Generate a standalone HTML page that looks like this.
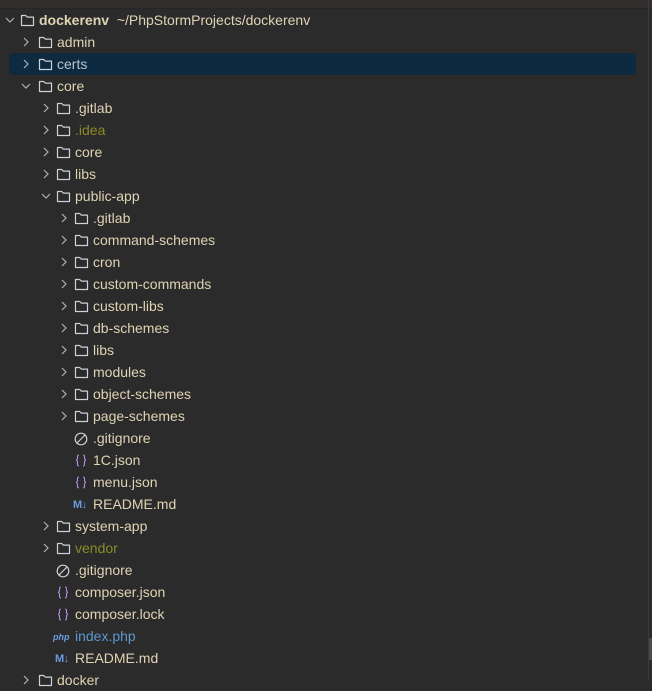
<!DOCTYPE html>
<html><head><meta charset="utf-8"><style>
html,body{margin:0;padding:0}
body{width:652px;height:681px;background:#2b2b2b;position:relative;overflow:hidden;font-family:"Liberation Sans","DejaVu Sans",sans-serif;font-size:14px;color:#ded3b3}
.top{position:absolute;left:0;top:0;width:652px;height:8px;background:#312e2d;border-bottom:1px solid #262626}
.sel{position:absolute;left:9px;top:53px;width:627px;height:22px;background:#0d2a40;border-radius:4px}
.r{position:absolute;height:22px;line-height:22px;white-space:nowrap}
.ch{position:absolute;top:0;width:12px;height:22px;line-height:0}
.ch svg,.ic svg{display:block}
.ic{position:absolute;top:5px;line-height:0;width:16px;height:14px}
.t{position:absolute;top:0}
.ol{color:#8a8c27}
.bl{color:#5c98cf}
.vbar{position:absolute;right:3px;top:0;width:1px;height:681px;background:#3a3a3a}
.thumb{position:absolute;right:0;top:638px;width:3px;height:22px;background:#4a4a4a}
</style></head><body>
<div class="top"></div>
<div class="sel"></div>
<div class="vbar"></div><div class="thumb"></div>
<div id="tree"></div>
<script>
var F='<svg width="15" height="13" viewBox="0 0 15 13"><path d="M1.5 1.5h4.2l1.6 1.6h6.2v8.4h-12z" fill="none" stroke="#ced0d6" stroke-width="1.2" stroke-linejoin="round"/></svg>';
var CR='<svg width="12" height="22" viewBox="0 0 12 22"><path d="M4 7l4 4-4 4" fill="none" stroke="#aeb1b7" stroke-width="1.2"/></svg>';
var CD='<svg width="12" height="22" viewBox="0 0 12 22"><path d="M2 9l4 4 4-4" fill="none" stroke="#aeb1b7" stroke-width="1.2"/></svg>';
var IG='<svg width="14" height="14" viewBox="0 0 14 14"><circle cx="7" cy="7" r="5.8" fill="none" stroke="#ced0d6" stroke-width="1.2"/><path d="M3 11L11 3" stroke="#ced0d6" stroke-width="1.2"/></svg>';
var JS='<svg width="14" height="14" viewBox="0 0 14 14"><path d="M5 1c-2 0-1.5 2.5-1.5 3.5s-1 1.8-1.5 1.8c.5 0 1.5.8 1.5 1.8s-.5 3.9 1.5 3.9M9 1c2 0 1.5 2.5 1.5 3.5s1 1.8 1.5 1.8c-.5 0-1.5.8-1.5 1.8s.5 3.9-1.5 3.9" fill="none" stroke="#b48ee8" stroke-width="1.1"/></svg>';
var MD='<span style="position:absolute;top:-4px;left:-1px;line-height:22px;font-size:11px;font-weight:bold;color:#6b9be0;letter-spacing:-0.5px">M&#8595;</span>';
var PH='<span style="position:absolute;top:-4px;left:-3px;line-height:22px;font-size:9px;font-style:italic;font-weight:bold;color:#6b9be0">php</span>';
var rows=[
[0,'o','F','dockerenv',''],
[1,'c','F','admin',''],
[1,'c','F','certs','sel'],
[1,'o','F','core',''],
[2,'c','F','.gitlab',''],
[2,'c','F','.idea','ol'],
[2,'c','F','core',''],
[2,'c','F','libs',''],
[2,'o','F','public-app',''],
[3,'c','F','.gitlab',''],
[3,'c','F','command-schemes',''],
[3,'c','F','cron',''],
[3,'c','F','custom-commands',''],
[3,'c','F','custom-libs',''],
[3,'c','F','db-schemes',''],
[3,'c','F','libs',''],
[3,'c','F','modules',''],
[3,'c','F','object-schemes',''],
[3,'c','F','page-schemes',''],
[3,'f','IG','.gitignore',''],
[3,'f','JS','1C.json',''],
[3,'f','JS','menu.json',''],
[3,'f','MD','README.md',''],
[2,'c','F','system-app',''],
[2,'c','F','vendor','ol'],
[2,'f','IG','.gitignore',''],
[2,'f','JS','composer.json',''],
[2,'f','JS','composer.lock',''],
[2,'f','PH','index.php','bl'],
[2,'f','MD','README.md',''],
[1,'c','F','docker','']
];
var icons={F:F,IG:IG,JS:JS,MD:MD,PH:PH};
var h='';
rows.forEach(function(r,i){
 var y=9+i*22, base=4+r[0]*18;
 var cx=(r[0]==1)?base-2:base;
 var s='<div class="r" style="top:'+y+'px;left:0;width:640px">';
 if(r[1]=='c') s+='<span class="ch" style="left:'+cx+'px">'+CR+'</span>';
 if(r[1]=='o') s+='<span class="ch" style="left:'+cx+'px">'+CD+'</span>';
 s+='<span class="ic" style="left:'+(base+16)+'px">'+icons[r[2]]+'</span>';
 var txt=r[3];
 if(i==0){txt='<b>dockerenv</b>&nbsp; ~/PhpStormProjects/dockerenv';}
 var st=' style="left:'+(base+35)+'px'+(r[4]=='sel'?';color:#b9c2cc':'')+'"';
 s+='<span class="t '+(r[4]!='sel'?r[4]:'')+'"'+st+'>'+txt+'</span></div>';
 h+=s;
});
document.getElementById('tree').innerHTML=h;
</script>
</body></html>
